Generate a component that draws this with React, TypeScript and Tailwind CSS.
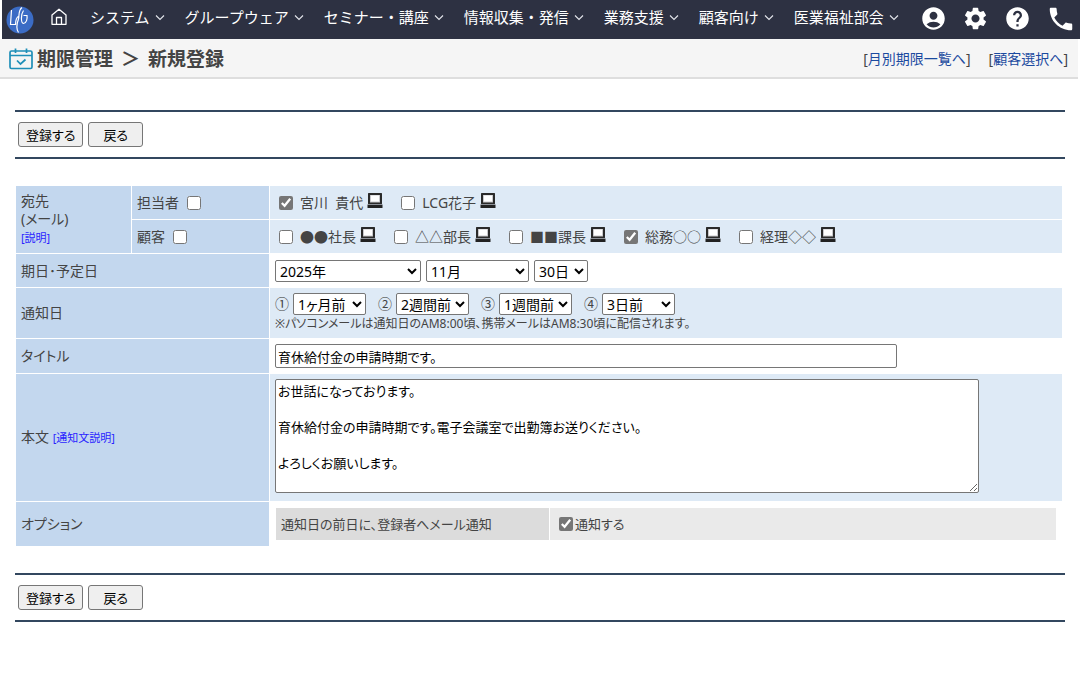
import React, { useState } from 'react';
import { MdAccountCircle, MdSettings, MdHelp, MdPhone } from 'react-icons/md';

const MENU_ITEMS = [
  'システム',
  'グループウェア',
  'セミナー・講座',
  '情報収集・発信',
  '業務支援',
  '顧客向け',
  '医業福祉部会',
];

const STAFF = [
  { id: 'staff1', name: '宮川\u00a0\u00a0貴代', checked: true },
  { id: 'staff2', name: 'LCG花子', checked: false },
];

const CLIENTS = [
  { id: 'client1', name: '●●社長', checked: false },
  { id: 'client2', name: '△△部長', checked: false },
  { id: 'client3', name: '■■課長', checked: false },
  { id: 'client4', name: '総務○○', checked: true },
  { id: 'client5', name: '経理◇◇', checked: false },
];

const NOTICE_OPTIONS = ['1ヶ月前', '2週間前', '1週間前', '3日前', '前日', '当日'];

const NOTICES = [
  { mark: '①', value: '1ヶ月前' },
  { mark: '②', value: '2週間前' },
  { mark: '③', value: '1週間前' },
  { mark: '④', value: '3日前' },
];

const MESSAGE = `お世話になっております。

育休給付金の申請時期です。電子会議室で出勤簿お送りください。

よろしくお願いします。`;

const FIELD = 'border border-[#767676] rounded-[2px] bg-white text-black';
const SELECT = `h-[22px] ${FIELD}`;
const BUTTON = 'h-[25px] rounded-[3px] border border-[#767676] bg-[#efefef] text-[13px] text-black';
const CHECKBOX = 'size-3.5 shrink-0 accent-[#767676]';
const TH = 'bg-[#c3d7ee] px-[5px] text-left font-normal';

const Logo = () => (
  <svg width="28" height="28" viewBox="0 0 28 28" fill="none">
    <circle cx="14" cy="14" r="13.5" fill="#3b6cc5" />
    <path
      d="M5.500 4L4.500 18.500H9.500M16 1.500C12 4.500 13.500 9 12.500 13C11 17 9.500 22 12.500 26.500M13 10C10.500 11 9.500 15 9.500 19M17.500 4.500C15 8 14.500 17 17.500 17.500C20.500 17 21.500 13 21 9.500H17.500"
      stroke="#fff"
      strokeWidth="1.200"
    />
  </svg>
);

const HomeIcon = () => (
  <svg width="18" height="18" viewBox="0 0 18 18" fill="none" stroke="#fff" strokeWidth="1.300" strokeLinejoin="round">
    <path d="M2 7L9 1.200L16 7V16.300H2ZM6.500 16.300V9.500H11.500V16.300" />
  </svg>
);

const ChevronIcon = () => (
  <svg width="10" height="8" viewBox="0 0 10 8" fill="none" stroke="#e4e6ec" strokeWidth="1.100">
    <path d="M1 2.500L5 6.500L9 2.500" />
  </svg>
);

const CalendarIcon = () => (
  <svg width="24" height="22" viewBox="0 0 24 22" fill="none" stroke="#1f8fb8" strokeWidth="1.700">
    <rect x="1" y="3" width="22" height="17.500" rx="1.500" />
    <path d="M1 7.500H23M6.500 0.500V5M17.500 0.500V5M8 12.500L11.500 16L16.500 11.500" />
  </svg>
);

const PcIcon = () => (
  <svg width="16" height="16" viewBox="0 0 16 16">
    <rect x="1" y="0" width="14" height="11" rx="0.500" fill="#2a2a2a" />
    <rect x="3" y="2" width="10" height="7.500" fill="#c9c9cc" />
    <rect x="4" y="2.500" width="8" height="6" fill="#fff" />
    <rect x="0.500" y="11" width="15" height="1" fill="#8d9198" />
    <rect x="0.500" y="12" width="15" height="3" fill="#222" />
  </svg>
);

const ActionBar = () => (
  <div className="border-y-2 border-[#33475f] px-[3px] py-[10px] flex gap-[5px]">
    <button type="button" className={`${BUTTON} px-[7px]`}>
      登録する
    </button>
    <button type="button" className={`${BUTTON} px-[14px]`}>
      戻る
    </button>
  </div>
);

interface Person {
  id: string;
  name: string;
  checked: boolean;
}

const Recipients: React.FC<{ people: Person[]; onToggle: (id: string) => void }> = ({ people, onToggle }) => (
  <div className="flex flex-wrap items-center gap-[18px] pl-1">
    {people.map((person) => (
      <label key={person.id} className="flex items-center gap-[7px]">
        <input type="checkbox" className={CHECKBOX} checked={person.checked} onChange={() => onToggle(person.id)} />
        <span className="flex items-center gap-1">
          {person.name}
          <span className="pb-1">
            <PcIcon />
          </span>
        </span>
      </label>
    ))}
  </div>
);

const App: React.FC = () => {
  const [staff, setStaff] = useState<Person[]>(STAFF);
  const [clients, setClients] = useState<Person[]>(CLIENTS);
  const [title, setTitle] = useState('育休給付金の申請時期です。');
  const [body, setBody] = useState(MESSAGE);

  const toggle = (list: Person[], id: string) =>
    list.map((p) => (p.id === id ? { ...p, checked: !p.checked } : p));

  return (
    <div className="font-['Noto_Sans','Noto_Sans_CJK_JP',sans-serif] text-sm leading-[18px] text-[#444] bg-white">
      <header className="ml-0.5 h-[39px] bg-[#2d3142] text-white flex items-center pl-1 pr-1">
        <a href="#top" aria-label="LCG">
          <Logo />
        </a>
        <a href="#home" aria-label="ホーム" className="ml-4 mb-1.5">
          <HomeIcon />
        </a>
        <nav className="ml-[22px] mb-1.5 flex gap-5 text-[15px] whitespace-nowrap">
          {MENU_ITEMS.map((item) => (
            <a key={item} href="#menu" className="flex items-center gap-[5px]">
              {item}
              <ChevronIcon />
            </a>
          ))}
        </nav>
        <div className="ml-auto mb-0.5 flex items-center gap-[15px]">
          <button type="button" aria-label="アカウント"><MdAccountCircle size={27} /></button>
          <button type="button" aria-label="設定"><MdSettings size={27} /></button>
          <button type="button" aria-label="ヘルプ"><MdHelp size={27} /></button>
          <button type="button" aria-label="電話"><MdPhone size={30} /></button>
        </div>
      </header>

      <div className="mr-0.5 h-10 bg-[#f5f5f5] border-b-2 border-[#dedede] flex items-center justify-between pl-[9px] pr-2.5">
        <h1 className="pt-0.5 flex items-center gap-1 text-[19px] font-bold">
          <CalendarIcon />
          <span>期限管理</span>
          <span className="mx-1">＞</span>
          <span>新規登録</span>
        </h1>
        <div className="pt-0.5 flex gap-[18px] [font-feature-settings:'palt']">
          <span>[<a href="#monthly" className="text-[#1b4a9f]">月別期限一覧へ</a>]</span>
          <span>[<a href="#client" className="text-[#1b4a9f]">顧客選択へ</a>]</span>
        </div>
      </div>

      <main className="px-[15px] pt-[31px] pb-10 [font-feature-settings:'palt']">
        <ActionBar />

        <form className="mt-[26px] mb-[26px] mr-0.5">
          <table className="w-full border-separate border-spacing-px">
            <tbody>
              <tr className="h-[33px]">
                <th rowSpan={2} className={`${TH} w-[115px]`}>
                  宛先<br />
                  (メール)<br />
                  <a href="#help" className="text-[11px] text-[#2a1fff]">[説明]</a>
                </th>
                <th className={`${TH} w-[137px]`}>
                  <label className="flex items-center gap-2">
                    担当者
                    <input type="checkbox" className={CHECKBOX} />
                  </label>
                </th>
                <td className="bg-[#deeaf6] px-[5px]">
                  <Recipients people={staff} onToggle={(id) => setStaff(toggle(staff, id))} />
                </td>
              </tr>
              <tr className="h-[33px]">
                <th className={TH}>
                  <label className="flex items-center gap-2">
                    顧客
                    <input type="checkbox" className={CHECKBOX} />
                  </label>
                </th>
                <td className="bg-[#deeaf6] px-[5px]">
                  <Recipients people={clients} onToggle={(id) => setClients(toggle(clients, id))} />
                </td>
              </tr>
              <tr className="h-[33px]">
                <th colSpan={2} className={TH}>期日･予定日</th>
                <td className="px-[5px]">
                  <div className="flex gap-[5px]">
                    <select aria-label="年" className={`${SELECT} w-[146px]`} defaultValue="2025年">
                      <option>2025年</option>
                      <option>2026年</option>
                    </select>
                    <select aria-label="月" className={`${SELECT} w-[103px]`} defaultValue="11月">
                      <option>11月</option>
                      <option>12月</option>
                    </select>
                    <select aria-label="日" className={`${SELECT} w-[54px]`} defaultValue="30日">
                      <option>29日</option>
                      <option>30日</option>
                    </select>
                  </div>
                </td>
              </tr>
              <tr className="h-[50px]">
                <th colSpan={2} className={TH}>通知日</th>
                <td className="bg-[#deeaf6] px-[5px]">
                  <div className="flex gap-3">
                    {NOTICES.map((notice) => (
                      <label key={notice.mark} className="flex items-center gap-1">
                        {notice.mark}
                        <select className={`${SELECT} w-[73px]`} defaultValue={notice.value}>
                          {NOTICE_OPTIONS.map((option) => (
                            <option key={option}>{option}</option>
                          ))}
                        </select>
                      </label>
                    ))}
                  </div>
                  <p className="text-xs leading-[18px]">※パソコンメールは通知日のAM8:00頃、携帯メールはAM8:30頃に配信されます。</p>
                </td>
              </tr>
              <tr className="h-[34px]">
                <th colSpan={2} className={TH}><label htmlFor="title">タイトル</label></th>
                <td className="px-[5px]">
                  <input
                    id="title"
                    type="text"
                    className={`${FIELD} block h-[24px] w-[622px] max-w-full px-0.5 text-[13px]`}
                    value={title}
                    onChange={(e) => setTitle(e.target.value)}
                  />
                </td>
              </tr>
              <tr>
                <th colSpan={2} className={TH}>
                  <label htmlFor="body">本文</label>{' '}
                  <a href="#help" className="text-[11px] text-[#2a1fff]">[通知文説明]</a>
                </th>
                <td className="bg-[#deeaf6] px-[5px] pt-[5px] pb-2">
                  <textarea
                    id="body"
                    className={`${FIELD} block h-[114px] w-[704px] max-w-full px-0.5 py-0.5 text-[13px]`}
                    value={body}
                    onChange={(e) => setBody(e.target.value)}
                  />
                </td>
              </tr>
              <tr className="h-[44px]">
                <th colSpan={2} className={TH}>オプション</th>
                <td className="px-1.5">
                  <div className="flex gap-px h-8 text-[13px]">
                    <div className="w-[273px] bg-[#dcdcdc] px-[5px] flex items-center">通知日の前日に、登録者へメール通知</div>
                    <label className="flex-1 bg-[#eaeaea] px-[9px] flex items-center gap-0.5">
                      <input type="checkbox" className={CHECKBOX} defaultChecked />
                      通知する
                    </label>
                  </div>
                </td>
              </tr>
            </tbody>
          </table>
        </form>

        <ActionBar />
      </main>
    </div>
  );
};

export default App;
